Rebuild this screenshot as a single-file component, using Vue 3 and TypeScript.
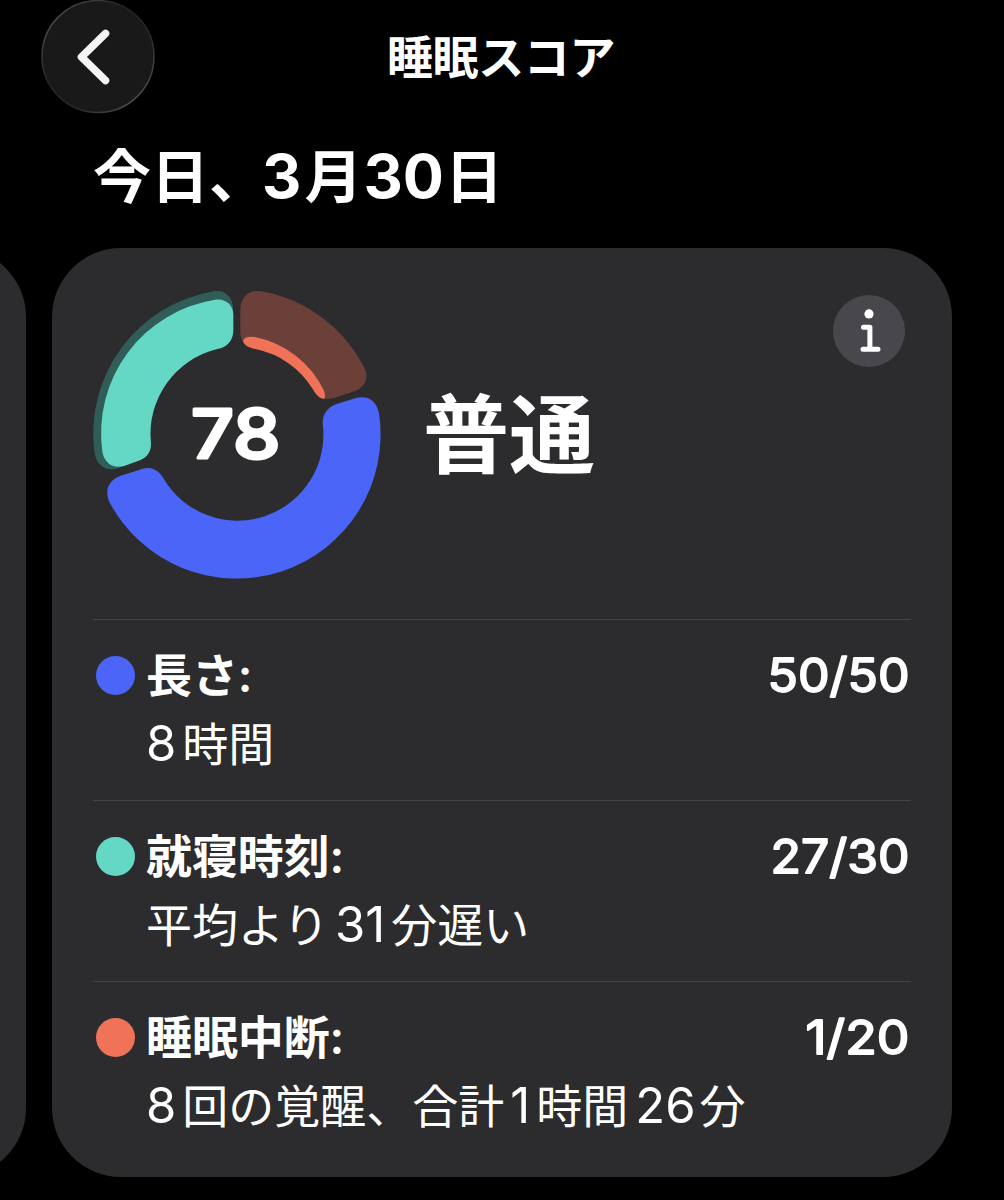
<script setup lang="ts">
interface Part {
  text: string
  latin?: boolean
  tight?: boolean
  before?: number
  after?: number
}

interface Metric {
  label: string
  detail: Part[]
  score: string
  color: string
  scoreWidth: number
}

const heading: Part[] = [
  { text: '今日' },
  { text: '、', tight: true },
  { text: '3', latin: true, after: 3 },
  { text: '月' },
  { text: '30', latin: true, before: 1, after: 1 },
  { text: '日' },
]

const metrics: Metric[] = [
  {
    label: '長さ',
    detail: [{ text: '8', latin: true, after: 6 }, { text: '時間' }],
    score: '50/50',
    color: '#4a65f8',
    scoreWidth: 142,
  },
  {
    label: '就寝時刻',
    detail: [{ text: '平均より' }, { text: '31', latin: true, before: 6, after: 6 }, { text: '分遅い' }],
    score: '27/30',
    color: '#64d8c4',
    scoreWidth: 139,
  },
  {
    label: '睡眠中断',
    detail: [
      { text: '8', latin: true, after: 6 },
      { text: '回の覚醒、合計' },
      { text: '1', latin: true, before: 6, after: 6 },
      { text: '時間' },
      { text: '26', latin: true, before: 7, after: 4 },
      { text: '分' },
    ],
    score: '1/20',
    color: '#f07259',
    scoreWidth: 104,
  },
]

function gaps(p: Part) {
  return { marginLeft: `${p.before ?? 0}px`, marginRight: `${p.after ?? 0}px` }
}
</script>

<template>
  <main class="screen">
    <header class="topbar">
      <button class="back" aria-label="戻る">
        <svg width="114" height="114" viewBox="0 0 114 114">
          <defs>
            <linearGradient id="rim" x1="0" y1="0" x2="1" y2="1">
              <stop offset="0.1" stop-color="#4c4c4c" />
              <stop offset="0.38" stop-color="#262626" />
              <stop offset="0.62" stop-color="#262626" />
              <stop offset="0.9" stop-color="#505050" />
            </linearGradient>
          </defs>
          <circle cx="57" cy="56.5" r="56" fill="#191919" stroke="url(#rim)" stroke-width="1.5" />
          <path d="M64.5 33.5 L40.5 57 L64.5 80.5" fill="none" stroke="#f5f5f5" stroke-width="7.6" stroke-linecap="round" stroke-linejoin="round" />
        </svg>
      </button>
      <h1 class="title">睡眠スコア</h1>
    </header>

    <h2 class="date">
      <span v-for="(p, i) in heading" :key="i" :class="{ latin: p.latin, tight: p.tight }" :style="gaps(p)">{{ p.text }}</span>
    </h2>

    <div class="carousel">
      <div class="card"></div>
      <section class="card">
        <div class="summary">
          <svg class="ring" width="310" height="310" viewBox="0 0 930 930">
            <path fill="#315d59" d="M460 110 V92 C460 52 436 29 402 34 A432 432 0 0 0 44 520 C50 556 76 574 110 566 L150 551 L110 500 A380 380 0 0 1 400 110Z" />
            <path fill="#64d8c4" d="M460 105 V150 C460 184 440 202 412 207 A262 262 0 0 0 213 490 C214 516 200 533 180 541 L132 558 C98 568 72 546 67 515 A406 406 0 0 1 405 59 C438 55 460 75 460 105Z" />
            <path fill="#6b4038" d="M481 90 C481 50 508 28 545 34 A432 432 0 0 1 855 268 C868 300 850 323 825 333 L762 354 C726 363 709 346 697 325 A260 260 0 0 0 530 208 C500 203 481 188 481 155Z" />
            <path fill="#f07259" d="M489 184 Q492 168 525 171 A295 295 0 0 1 732 332 Q737 348 733 357 C715 355 706 341 697 325 A260 260 0 0 0 530 208 C505 203 495 197 489 184Z" />
            <path fill="#4a65f8" d="M768 373 L825 355 C865 344 889 363 897 400 A432 432 0 0 1 88 666 C72 628 88 600 120 588 L188 566 C218 558 238 574 250 595 A258 258 0 0 0 728 430 C728 400 744 382 768 373Z" />
            <text class="total" x="467" y="534" text-anchor="middle" textLength="268" lengthAdjust="spacingAndGlyphs">78</text>
          </svg>
          <strong class="rating">普通</strong>
          <button class="info" aria-label="情報">
            <svg width="72" height="72" viewBox="0 0 72 72">
              <circle cx="36" cy="36" r="36" fill="#48484c" />
              <circle cx="36" cy="18.9" r="4.6" fill="#fff" />
              <path d="M30.5 32.2 H36.9 V54.3 M30 54.3 H45" fill="none" stroke="#fff" stroke-width="5" stroke-linecap="round" stroke-linejoin="round" />
            </svg>
          </button>
        </div>

        <ul class="metrics">
          <li v-for="m in metrics" :key="m.label" class="metric">
            <span class="dot" :style="{ background: m.color }"></span>
            <div class="copy">
              <div class="label">{{ m.label }}<span class="latin">:</span></div>
              <div class="detail">
                <span v-for="(p, i) in m.detail" :key="i" :class="{ latin: p.latin }" :style="gaps(p)">{{ p.text }}</span>
              </div>
            </div>
            <svg class="score" width="160" height="60" viewBox="0 0 160 60">
              <text x="158.5" y="47" text-anchor="end" :textLength="m.scoreWidth" lengthAdjust="spacingAndGlyphs">{{ m.score }}</text>
            </svg>
          </li>
        </ul>
      </section>
    </div>
  </main>
</template>

<style>
body {
  margin: 0;
  background: #000;
}
</style>

<style scoped>
.screen {
  width: 1004px;
  height: 1200px;
  overflow: hidden;
  background: #000;
  color: #fff;
  font-family: 'Noto Sans CJK JP', sans-serif;
}

.topbar {
  display: grid;
  grid-template-columns: 114px 1fr 114px;
  align-items: center;
  height: 114px;
  padding: 0 43px 0 41px;
}

button {
  display: block;
  padding: 0;
  border: 0;
  background: none;
}

svg {
  display: block;
}

.title {
  margin: 0 0 6px;
  font-size: 46px;
  line-height: 60px;
  font-weight: 700;
  letter-spacing: -0.4px;
  text-align: center;
}

.latin {
  font-family: Inter, 'Liberation Sans', sans-serif;
}

.date {
  display: flex;
  align-items: baseline;
  height: 90px;
  margin: 14px 0 30px 93px;
  font-size: 58px;
  line-height: 90px;
  font-weight: 700;
  white-space: nowrap;
}

.date .latin {
  font-size: 61px;
}

.date .tight {
  letter-spacing: -5px;
}

.carousel {
  display: flex;
  gap: 26px;
  width: 1826px;
  margin-left: -874px;
}

.card {
  box-sizing: border-box;
  flex: 0 0 900px;
  height: 929px;
  padding: 0 41px;
  border-radius: 69px;
  background: #2c2c2e;
}

.summary {
  display: flex;
  align-items: center;
  height: 371px;
}

.ring {
  flex: none;
  margin: 2px 0 0 -13px;
}

.total {
  font-family: Inter, sans-serif;
  font-size: 204px;
  font-weight: 500;
  fill: #fff;
  stroke: #fff;
  stroke-width: 9px;
  stroke-linejoin: round;
}

.rating {
  flex: 1;
  margin: 0 0 8px 33px;
  font-size: 86px;
  line-height: 100px;
  font-weight: 700;
}

.info {
  align-self: flex-start;
  margin: 47px 6px 0 0;
}

.metrics {
  margin: 0;
  padding: 0;
  list-style: none;
}

.metric {
  box-sizing: border-box;
  display: flex;
  align-items: flex-start;
  height: 181px;
  padding: 18px 0 0 3px;
  border-top: 1px solid #454548;
}

.dot {
  flex: none;
  width: 39px;
  height: 39px;
  margin: 18px 11px 0 0;
  border-radius: 50%;
}

.copy {
  flex: 1;
}

.label,
.detail {
  display: flex;
  align-items: baseline;
  height: 69px;
  font-size: 46px;
  line-height: 69px;
  white-space: nowrap;
}

.label {
  font-weight: 700;
  letter-spacing: -0.1px;
}

.label .latin {
  font-weight: 600;
}

.detail .latin {
  font-size: 49px;
}

.score {
  flex: none;
  margin-top: 7px;
}

.score text {
  font-family: Inter, sans-serif;
  font-size: 47px;
  font-weight: 400;
  fill: #fff;
  stroke: #fff;
  stroke-width: 1.8px;
  stroke-linejoin: round;
}
</style>
